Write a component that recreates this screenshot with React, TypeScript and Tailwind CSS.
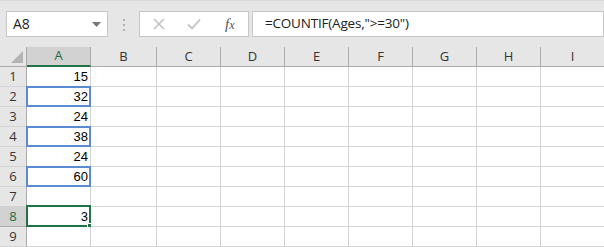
import { ReactNode } from 'react';

const cols = ['A', 'B', 'C', 'D', 'E', 'F', 'G', 'H', 'I'];
const widths = ['w-[64px]', 'w-[66px]', 'w-[64px]', 'w-[64px]', 'w-[64px]', 'w-[64px]', 'w-[64px]', 'w-[64px]', 'w-[64px]'];
const values: Record<number, string> = { 1: '15', 2: '32', 3: '24', 4: '38', 5: '24', 6: '60', 8: '3' };
const blueRows = [2, 4, 6];

function Toolbar() {
  return (
    <div className="h-[47px] flex items-start pt-[11px] pl-[6px] gap-0 bg-[#e6e6e6] border-t border-[#d9d9d9]">
      {/* Name box */}
      <div className="w-[102px] h-[26px] -mt-px bg-white border border-[#c6c6c6] flex items-center justify-between pl-[6px] pr-[6px]">
        <span className="text-[14px] text-[#222] leading-none">A8</span>
        <svg width="9" height="5" viewBox="0 0 9 5"><path d="M0 0h9L4.5 5z" fill="#777" /></svg>
      </div>
      {/* Grip dots */}
      <div className="w-[31px] h-[26px] flex flex-col items-center justify-center gap-[3px]">
        <span className="w-[2px] h-[2px] bg-[#b0b0b0]" />
        <span className="w-[2px] h-[2px] bg-[#b0b0b0]" />
        <span className="w-[2px] h-[2px] bg-[#b0b0b0]" />
      </div>
      {/* Cancel / enter / fx */}
      <div className="w-[110px] h-[26px] -mt-px bg-white border border-[#c6c6c6] flex items-center">
        <svg className="ml-[13px]" width="12" height="12" viewBox="0 0 12 12">
          <path d="M1 1l10 10M11 1L1 11" stroke="#c2c2c2" strokeWidth="1.6" />
        </svg>
        <svg className="ml-[22px]" width="14" height="12" viewBox="0 0 14 12">
          <path d="M1 6.5l4 4L13 1.5" stroke="#c2c2c2" strokeWidth="1.8" fill="none" />
        </svg>
        <span className="ml-[24px] text-[15px] italic text-[#555] leading-none font-['Liberation_Serif',serif]">
          f<span className="text-[12px]">x</span>
        </span>
      </div>
      {/* Formula */}
      <div className="ml-[3px] w-[352px] h-[26px] -mt-px bg-white border border-[#c6c6c6] flex items-center pl-[12px]">
        <span className="text-[13.5px] tracking-[-0.2px] text-[#222] leading-none">=COUNTIF(Ages,"&gt;=30")</span>
      </div>
    </div>
  );
}

function HeaderCell({ w, children, active }: { w: string; children: ReactNode; active?: boolean }) {
  return (
    <div
      className={`${w} h-[20px] shrink-0 flex items-center justify-center text-[13px] border-r ${
        active
          ? 'bg-[#d2d2d2] text-[#1e6b3f] border-[#ababab] border-b-2 border-b-[#217346]'
          : 'text-[#333] border-[#ababab] border-b border-b-[#ababab]'
      }`}
    >
      {children}
    </div>
  );
}

function Row({ r }: { r: number }) {
  const sel = r === 8;
  return (
    <div className="flex h-[20px]">
      <div
        className={`w-[27px] shrink-0 flex items-center justify-center text-[13px] border-r border-b ${
          sel ? 'bg-[#d2d2d2] text-[#1e6b3f] border-r-[#217346] border-b-[#ababab]' : 'bg-[#e6e6e6] text-[#333] border-[#ababab] border-b-[#d4d4d4]'
        }`}
      >
        {r}
      </div>
      {cols.map((c, i) => (
        <div key={c} className={`${widths[i]} shrink-0 relative border-r border-b border-[#d4d4d4] bg-white`}>
          {c === 'A' && values[r] && (
            <div className="h-full flex items-center justify-end pr-[2px] text-[13px] text-black font-['Liberation_Sans',sans-serif]">
              {values[r]}
            </div>
          )}
          {c === 'A' && blueRows.includes(r) && (
            <div className="absolute -left-px -top-px -right-px -bottom-px border-2 border-[#5a8ad2]" />
          )}
          {c === 'A' && sel && (
            <>
              <div className="absolute -left-px -top-[2px] -right-px -bottom-px border-2 border-[#217346]" />
              <div className="absolute -right-[4px] -bottom-[4px] w-[7px] h-[7px] bg-[#217346] border border-white" />
            </>
          )}
        </div>
      ))}
    </div>
  );
}

export default function App() {
  return (
    <div className="w-[604px] h-[247px] overflow-hidden bg-white font-['Open_Sans','Noto_Sans',sans-serif]">
      <Toolbar />
      <div className="flex bg-[#e6e6e6]">
        <div className="w-[27px] h-[20px] shrink-0 border-r border-b border-[#ababab] flex items-end justify-end pr-[3px] pb-[3px]">
          <svg width="12" height="12" viewBox="0 0 12 12"><path d="M12 0v12H0z" fill="#b4b4b4" /></svg>
        </div>
        {cols.map((c, i) => (
          <HeaderCell key={c} w={widths[i]} active={c === 'A'}>
            {c}
          </HeaderCell>
        ))}
      </div>
      {[1, 2, 3, 4, 5, 6, 7, 8, 9].map((r) => (
        <Row key={r} r={r} />
      ))}
    </div>
  );
}
